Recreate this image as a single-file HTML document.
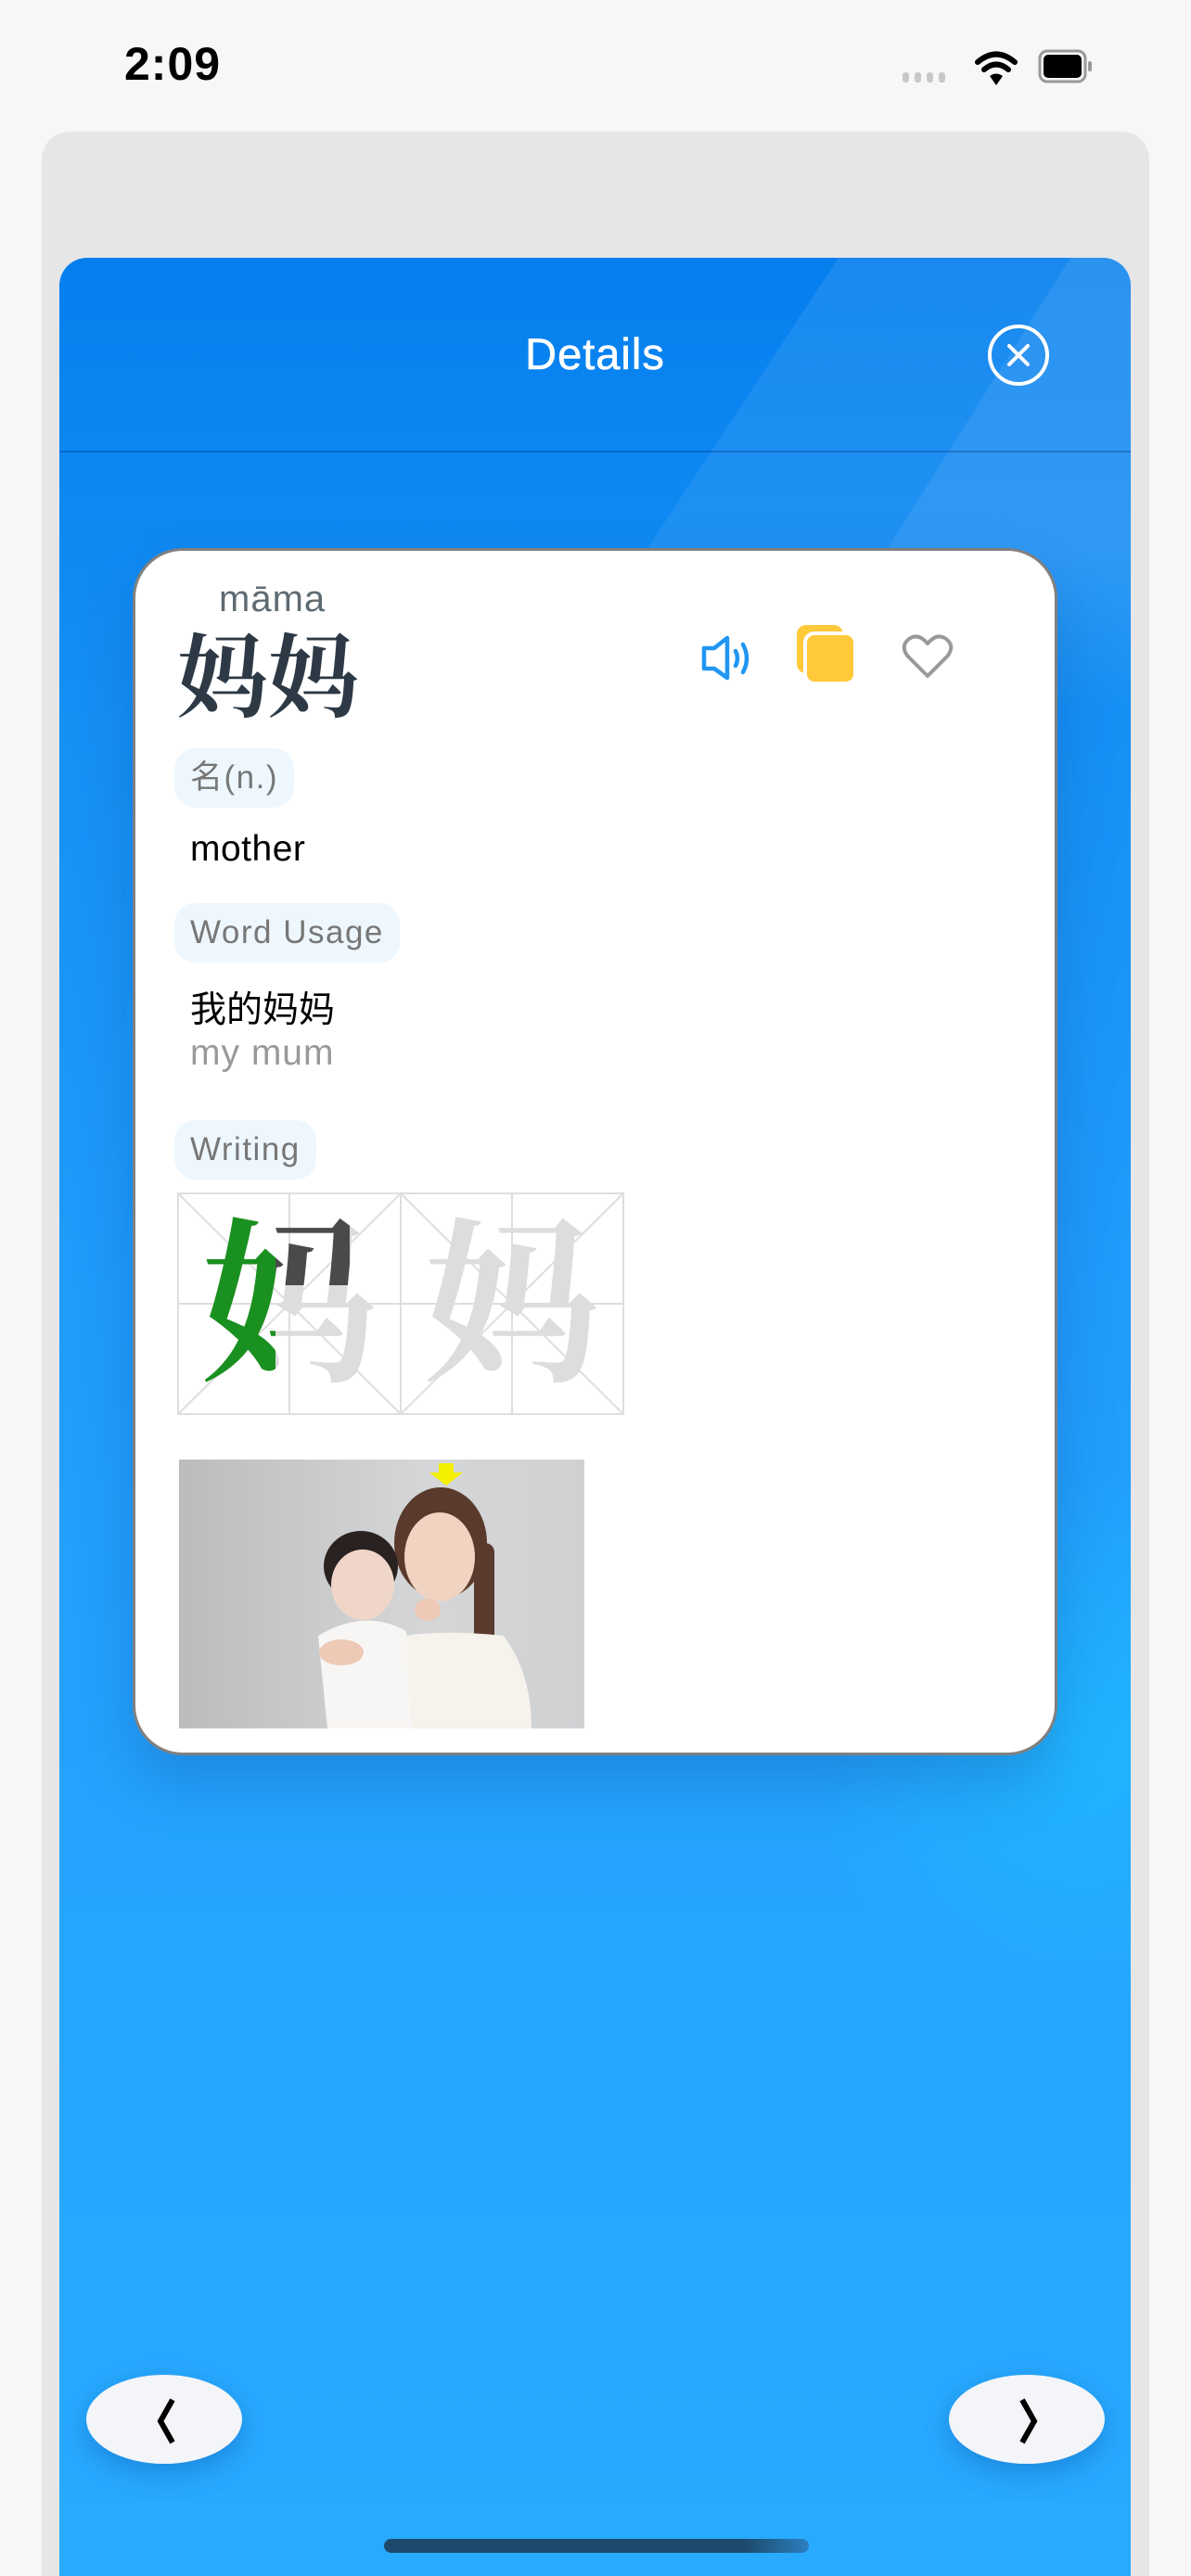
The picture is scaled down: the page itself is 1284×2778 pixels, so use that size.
<!DOCTYPE html>
<html><head><meta charset="utf-8"><style>
*{margin:0;padding:0;box-sizing:border-box}
body{width:1284px;height:2778px;background:#f7f7f7;position:relative;overflow:hidden;font-family:"Liberation Sans","Noto Sans CJK SC",sans-serif}
.abs{position:absolute}
.time{left:134px;top:40px;font-size:50px;font-weight:bold;color:#000;letter-spacing:1px}
.graycard{left:45px;top:142px;width:1194px;height:2636px;background:#e6e6e6;border-radius:30px 30px 0 0}
.panel{left:64px;top:278px;width:1155px;height:2500px;border-radius:30px 30px 0 0;overflow:hidden;
background:linear-gradient(180deg,#057fee 0%,#1590f5 20%,#1f9cfc 45%,#25a6fe 75%,#28aaff 100%)}
.glow{position:absolute;left:800px;top:1300px;width:600px;height:600px;border-radius:50%;background:radial-gradient(circle,rgba(30,200,255,0.5),rgba(30,200,255,0) 70%)}
.title{left:0;width:1155px;top:76px;text-align:center;color:#fff;font-size:47px;letter-spacing:1px;-webkit-text-stroke:0.6px #fff}
.hline{left:0;top:208px;width:1155px;height:2px;background:rgba(0,60,140,0.35)}
.card{left:143px;top:591px;width:997px;height:1302px;background:#fff;border:3px solid #808080;border-radius:54px;box-shadow:0 30px 60px rgba(20,60,140,0.25)}
.tag{background:#eef7fe;color:#777;font-size:35px;letter-spacing:1.5px;border-radius:22px;padding:0 17px;height:64px;line-height:64px}
.nav{width:168px;height:96px;border-radius:50%;background:#f3f5f9;box-shadow:0 10px 30px rgba(0,60,140,0.3)}
</style></head><body>
<div class="abs time">2:09</div>
<svg class="abs" style="left:970px;top:50px" width="260" height="45" viewBox="0 0 260 45">
<g fill="#c8c8c8"><rect x="3" y="28" width="7" height="11" rx="3"/><rect x="16" y="28" width="7" height="11" rx="3"/><rect x="29" y="28" width="7" height="11" rx="3"/><rect x="42" y="28" width="7" height="11" rx="3"/></g>
<g fill="none" stroke="#000" stroke-width="6" stroke-linecap="round"><path d="M84 17 Q104 0 124 17"/><path d="M91 25 Q104 14 117 25"/></g>
<path d="M97 32 L104 42 L111 32 Q104 27 97 32Z" fill="#000"/>
<rect x="151" y="5" width="49" height="33" rx="8" fill="none" stroke="#999" stroke-width="3"/>
<rect x="155" y="9" width="41" height="25" rx="5" fill="#000"/>
<rect x="203" y="16" width="4" height="11" rx="2" fill="#999"/>
</svg>
<div class="abs graycard"></div>
<div class="abs panel">
 <svg class="abs" style="left:0;top:0" width="1155" height="700" viewBox="0 0 1155 700">
  <defs><linearGradient id="fd" x1="0" y1="0" x2="0" y2="1"><stop offset="0" stop-color="#fff" stop-opacity="0.08"/><stop offset="0.45" stop-color="#fff" stop-opacity="0.07"/><stop offset="0.7" stop-color="#fff" stop-opacity="0"/></linearGradient></defs>
  <polygon points="840,0 1155,0 1155,700 380,700" fill="url(#fd)"/>
  <polygon points="1090,0 1155,0 1155,700 650,700" fill="url(#fd)"/>
 </svg>
 <div class="glow"></div>
 <div class="abs title">Details</div>
 <svg class="abs" style="left:999px;top:70px" width="70" height="70" viewBox="0 0 70 70"><circle cx="35" cy="35" r="31" fill="none" stroke="#fff" stroke-width="4"/><path d="M25 25 L45 45 M45 25 L25 45" stroke="#fff" stroke-width="4" stroke-linecap="round"/></svg>
 <div class="abs hline"></div>
 <div class="abs nav" style="left:29px;top:2283px"></div>
 <div class="abs nav" style="left:959px;top:2283px"></div>
 <svg class="abs" style="left:95px;top:2302px" width="40" height="60"><path d="M27 8 L14 31 L27 54" fill="none" stroke="#000" stroke-width="6"/></svg>
 <svg class="abs" style="left:1025px;top:2302px" width="40" height="60"><path d="M13 8 L26 31 L13 54" fill="none" stroke="#000" stroke-width="6"/></svg>
 <div class="abs" style="left:350px;top:2460px;width:458px;height:15px;border-radius:8px;background:linear-gradient(90deg,#1d4a6c 0%,#1d4a6c 85%,#2a80c0 100%)"></div>
</div>
<div class="abs card">
 <div class="abs" style="left:90px;top:30px;font-size:40px;letter-spacing:1px;color:#5f6b73">māma</div>
 <div class="abs" style="left:45px;top:70px;font-size:98px;line-height:120px;color:#2d3a45;font-weight:bold;font-family:'Noto Serif CJK SC','Liberation Serif',serif">妈妈</div>
 <svg class="abs" style="left:608px;top:91px" width="60" height="50" viewBox="0 0 60 50"><path d="M5 14 H16 L30 3 V46 L16 36 H5 Z" fill="none" stroke="#2196f3" stroke-width="4.5" stroke-linejoin="round"/><path d="M39 17 Q43 25 39 33" fill="none" stroke="#2196f3" stroke-width="4.5" stroke-linecap="round"/><path d="M47 10 Q55 25 47 40" fill="none" stroke="#2196f3" stroke-width="4.5" stroke-linecap="round"/></svg>
 <svg class="abs" style="left:712px;top:79px" width="66" height="66" viewBox="0 0 66 66"><rect x="1" y="1" width="50" height="52" rx="10" fill="#ffc93a"/><rect x="10" y="10" width="54" height="54" rx="10" fill="#ffc93a" stroke="#fff" stroke-width="4"/></svg>
 <svg class="abs" style="left:826px;top:89px" width="56" height="50" viewBox="0 0 56 50"><path d="M28 46 L7 25 Q-2 14 8 6 Q18 -1 28 11 Q38 -1 48 6 Q58 14 49 25 Z" fill="none" stroke="#999" stroke-width="4" stroke-linejoin="round"/></svg>
 <div class="abs tag" style="left:42px;top:213px">名(n.)</div>
 <div class="abs" style="left:59px;top:300px;font-size:39px;letter-spacing:0.5px;color:#000">mother</div>
 <div class="abs tag" style="left:42px;top:380px">Word Usage</div>
 <div class="abs" style="left:59px;top:464px;font-size:39px;color:#000">我的妈妈</div>
 <div class="abs" style="left:59px;top:520px;font-size:39px;letter-spacing:1px;color:#999">my mum</div>
 <div class="abs tag" style="left:42px;top:614px">Writing</div>
 <svg class="abs" style="left:45px;top:692px" width="482" height="240" viewBox="0 0 482 240">
  <g stroke="#dedede" stroke-width="2" fill="none">
   <rect x="1" y="1" width="480" height="238"/><line x1="241" y1="1" x2="241" y2="239"/>
   <line x1="121" y1="1" x2="121" y2="239"/><line x1="361" y1="1" x2="361" y2="239"/><line x1="1" y1="120" x2="481" y2="120"/>
   <line x1="1" y1="1" x2="241" y2="239"/><line x1="241" y1="1" x2="1" y2="239"/>
   <line x1="241" y1="1" x2="481" y2="239"/><line x1="481" y1="1" x2="241" y2="239"/>
  </g>
  <g font-size="190" font-weight="bold" font-family="Noto Serif CJK SC,serif" text-anchor="middle">
  <text x="121" y="188" fill="#dddddd">妈</text>
  <text x="361" y="188" fill="#dddddd">妈</text>
  <defs><clipPath id="c1"><rect x="0" y="0" width="106" height="240"/></clipPath><clipPath id="c2"><rect x="106" y="20" width="80" height="80"/></clipPath></defs>
  <text x="121" y="188" fill="#1a9020" clip-path="url(#c1)">妈</text>
  <text x="121" y="188" fill="#4a4a4a" clip-path="url(#c2)">妈</text>
  </g>
 </svg>
 <svg class="abs" style="left:47px;top:980px" width="437" height="290" viewBox="0 0 437 290">
  <defs><linearGradient id="bg" x1="0" x2="1"><stop offset="0" stop-color="#bcbcbc"/><stop offset="0.6" stop-color="#d4d6d8"/><stop offset="1" stop-color="#cfd1d3"/></linearGradient></defs>
  <rect width="437" height="290" fill="url(#bg)"/>
  <path d="M280 4 h16 v10 h10 l-18 14 l-18 -14 h10z" fill="#f5f000"/>
  <ellipse cx="282" cy="90" rx="50" ry="60" fill="#5a3a2c"/>
  <rect x="318" y="90" width="22" height="130" rx="10" fill="#5a3a2c"/>
  <ellipse cx="281" cy="105" rx="38" ry="48" fill="#f1d3c2"/>
  <ellipse cx="196" cy="115" rx="40" ry="38" fill="#2a2220"/>
  <ellipse cx="198" cy="135" rx="34" ry="38" fill="#f0d6c8"/>
  <path d="M200 200 Q260 180 350 190 Q380 230 380 290 H180 Z" fill="#f6f2ec"/>
  <path d="M150 190 Q200 160 245 185 L250 290 H160 Z" fill="#f8f6f4"/>
  <ellipse cx="175" cy="208" rx="24" ry="14" fill="#edc9b6"/>
  <ellipse cx="268" cy="162" rx="14" ry="12" fill="#edc9b6"/>
 </svg>
</div>
</body></html>
